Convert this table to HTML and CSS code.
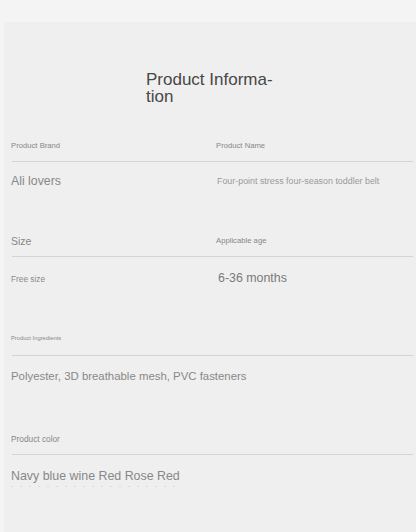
FILE: index.html
```html
<!DOCTYPE html>
<html lang="en">
<head>
    <meta charset="UTF-8">
    <meta name="viewport" content="width=device-width, initial-scale=1.0">
    <title>Product Information</title>
    <link rel="stylesheet" href="styles.css">
</head>
<body>
    <div class="top-band"></div>
    <main class="sheet">
        <h1 class="title">Product Informa-<br>tion</h1>

        <section class="spec spec-brand">
            <div class="row labels">
                <span class="cell label">Product Brand</span>
                <span class="cell label">Product Name</span>
            </div>
            <div class="rule"></div>
            <div class="row values">
                <span class="cell value brand">Ali lovers</span>
                <span class="cell value name">Four-point stress four-season toddler belt</span>
            </div>
        </section>

        <section class="spec spec-size">
            <div class="row labels">
                <span class="cell label size">Size</span>
                <span class="cell label age">Applicable age</span>
            </div>
            <div class="rule"></div>
            <div class="row values">
                <span class="cell value free">Free size</span>
                <span class="cell value months">6-36 months</span>
            </div>
        </section>

        <section class="spec spec-ingredients">
            <div class="label tiny">Product Ingredients</div>
            <div class="rule"></div>
            <div class="value wide">Polyester, 3D breathable mesh, PVC fasteners</div>
        </section>

        <section class="spec spec-color">
            <div class="label color">Product color</div>
            <div class="rule"></div>
            <div class="value wide navy">Navy blue wine Red Rose Red</div>
            <div class="cut-line"></div>
        </section>
    </main>
</body>
</html>
```

FILE: styles.css
```css
body {
    margin: 0;
    padding: 0;
    background-color: #f4f4f4;
    font-family: "Liberation Sans", Arial, sans-serif;
    color: #888;
    height: 532px;
    overflow: hidden;
}
.top-band {
    height: 22px;
    background-color: #f4f4f4;
}
.sheet {
    margin-left: 4px;
    padding: 0 3px 0 7px;
    background-color: #efefef;
    height: 510px;
}
.title {
    margin: 0;
    padding: 49.4px 0 0 135px;
    font-size: 17px;
    line-height: 17px;
    font-weight: normal;
    color: #474747;
}
.row {
    display: flex;
    align-items: flex-start;
}
.cell:first-child {
    width: 205px;
    flex-shrink: 0;
}
.label,
.value {
    line-height: 1;
    white-space: nowrap;
}
.label {
    font-size: 7.7px;
    color: #878787;
}
.rule {
    height: 1px;
    margin-left: 1px;
    background-color: #d4d4d4;
}
.spec-brand .labels {
    margin-top: 36.4px;
}
.spec-brand .rule {
    margin-top: 11.5px;
}
.spec-brand .values {
    padding-top: 13.1px;
}
.brand {
    font-size: 12.3px;
}
.name {
    font-size: 8.9px;
    margin-top: 1.7px;
    padding-left: 1px;
    color: #9a9a9a;
}
.spec-size .labels {
    margin-top: 48.7px;
}
.size {
    font-size: 10.5px;
}
.age {
    margin-top: 0.7px;
}
.spec-size .rule {
    margin-top: 9.7px;
}
.spec-size .values {
    padding-top: 15px;
}
.free {
    font-size: 8.3px;
    margin-top: 2.5px;
    color: #8a8a8a;
}
.months {
    font-size: 12.4px;
    padding-left: 2px;
    color: #7a7a7a;
}
.tiny {
    font-size: 5.8px;
    margin-top: 51.6px;
}
.spec-ingredients .rule {
    margin-top: 13.4px;
}
.wide {
    font-size: 11.4px;
    margin-top: 15px;
}
.color {
    font-size: 8.3px;
    margin-top: 52.6px;
}
.spec-color .rule {
    margin-top: 10.7px;
}
.navy {
    font-size: 12.4px;
    margin-top: 14.5px;
}
.cut-line {
    width: 168px;
    height: 1px;
    margin-top: 4px;
    background: repeating-linear-gradient(90deg, #dadada 0 2px, transparent 2px 9px);
}
```
